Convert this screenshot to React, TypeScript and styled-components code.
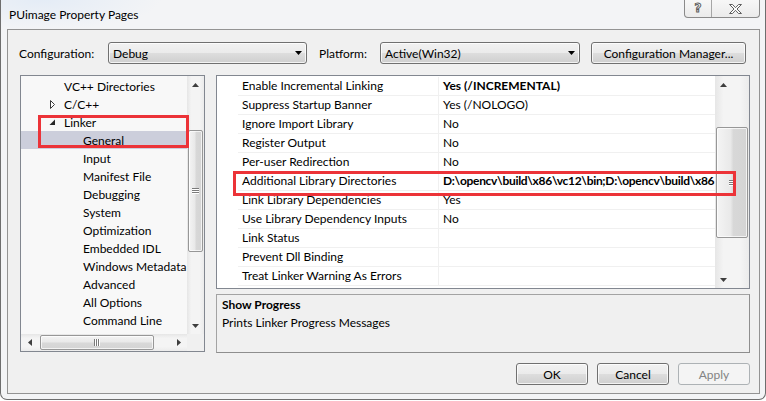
import React from "react";
import styled, { createGlobalStyle, css } from "styled-components";

const FONT = `Lato, "Liberation Sans", "DejaVu Sans", sans-serif`;

const GlobalStyle = createGlobalStyle`
  html, body { margin: 0; padding: 0; background: #ffffff; }
  body { font-family: ${FONT}; font-size: 12px; color: #000; }
  *, *::before, *::after { box-sizing: border-box; }
`;

const Window = styled.div`
  width: 766px;
  height: 400px;
  display: flex;
  flex-direction: column;
  background: radial-gradient(ellipse 120px 30px at 40px 0px, #e4ecf6 0%, rgba(228,236,246,0) 100%), #f3f4f6;
  border: 1px solid #6e6e6e;
  border-top: none;
  border-radius: 0 0 7px 7px;
`;

const TitleBar = styled.div`
  height: 29px;
  flex: none;
  display: flex;
  justify-content: space-between;
  align-items: center;
  padding: 0 5px 0 8px;
`;

const TitleText = styled.span`
  font-size: 12px;
  color: #000;
`;

const CaptionGroup = styled.div`
  align-self: flex-start;
  display: flex;
  height: 18px;
  border: 1px solid #8a8a8a;
  border-top: none;
  border-radius: 0 0 4px 4px;
  background: linear-gradient(#f7f7f7, #ebebeb);
  overflow: hidden;
`;

const CaptionButton = styled.div<{ $w: number; $divider?: boolean }>`
  width: ${(p) => p.$w}px;
  display: flex;
  align-items: center;
  justify-content: center;
  ${(p) => p.$divider && css`border-left: 1px solid #a6a6a6;`}
`;

const HelpGlyph = styled.span`
  font-family: "DejaVu Sans", sans-serif;
  font-weight: bold;
  font-size: 12px;
  line-height: 12px;
  color: #ffffff;
  -webkit-text-stroke: 1px #5e5e5e;
  margin-top: -2px;
`;

const Client = styled.div`
  flex: 1;
  margin: 0 5px 5px 6px;
  border: 1px solid #939393;
  background: #f0f0f0;
  padding: 12px 9px 0 11px;
  display: flex;
  flex-direction: column;
`;

const ConfigRow = styled.div`
  display: flex;
  align-items: center;
  height: 22px;
`;

const FieldLabel = styled.span<{ $w: number; $ml?: number }>`
  width: ${(p) => p.$w}px;
  margin-left: ${(p) => p.$ml ?? 0}px;
  white-space: nowrap;
`;

const win7Face = css`
  background: linear-gradient(#f2f2f2 0%, #ebebeb 48%, #dddddd 52%, #cfcfcf 100%);
  border: 1px solid #707070;
  border-radius: 3px;
  box-shadow: inset 0 0 0 1px rgba(255, 255, 255, 0.75);
`;

const Combo = styled.div<{ $w: number }>`
  ${win7Face};
  width: ${(p) => p.$w}px;
  height: 22px;
  display: flex;
  align-items: center;
  justify-content: space-between;
  padding: 0 4px 0 4px;
`;

const Button = styled.div<{ $w: number; $ml?: number; $disabled?: boolean }>`
  ${win7Face};
  width: ${(p) => p.$w}px;
  margin-left: ${(p) => p.$ml ?? 0}px;
  height: 22px;
  display: flex;
  align-items: center;
  justify-content: center;
  ${(p) =>
    p.$disabled &&
    css`
      background: #f4f4f4;
      border-color: #adb2b5;
      box-shadow: none;
      color: #838383;
    `}
`;

const Body = styled.div`
  margin-top: 11px;
  margin-left: 1px;
  display: flex;
  gap: 11px;
  height: 278px;
`;

const TreePanel = styled.div`
  position: relative;
  width: 185px;
  height: 277px;
  border: 1px solid #828790;
  background: #f8f8f8;
  display: grid;
  grid-template-columns: 1fr 17px;
  grid-template-rows: 1fr 17px;
`;

const TreeList = styled.div`
  overflow: hidden;
  padding-top: 1px;
`;

const TreeRow = styled.div<{ $level: number; $selected?: boolean }>`
  height: 18px;
  display: flex;
  align-items: center;
  padding-left: ${(p) => 27 + 19 * p.$level}px;
  white-space: nowrap;
  ${(p) => p.$selected && css`background: #cccedb;`}
`;

const ArrowSlot = styled.span`
  width: 16px;
  flex: none;
  display: flex;
  align-items: center;
`;

const Corner = styled.div`
  background: #f0f0f0;
`;

const VTrack = styled.div`
  display: flex;
  flex-direction: column;
  background: linear-gradient(to right, #e6e6e6, #f4f4f4 25%, #f4f4f4 75%, #ebebeb);
`;

const HTrack = styled.div`
  display: flex;
  background: linear-gradient(#e6e6e6, #f4f4f4 25%, #f4f4f4 75%, #ebebeb);
`;

const ArrowBox = styled.div`
  width: 17px;
  height: 17px;
  flex: none;
  display: flex;
  align-items: center;
  justify-content: center;
`;

const TrackSpace = styled.div`
  flex: 1;
  display: flex;
  flex-direction: inherit;
`;

const Gap = styled.div<{ $size: number }>`
  flex: none;
  width: ${(p) => p.$size}px;
  height: ${(p) => p.$size}px;
`;

const VThumb = styled.div<{ $len: number }>`
  flex: none;
  height: ${(p) => p.$len}px;
  margin: 0 1px;
  border: 1px solid #979797;
  border-radius: 2px;
  background: linear-gradient(to right, #f4f4f4, #e9e9e9 45%, #d8d8d8 55%, #d4d4d4);
  box-shadow: inset 0 0 0 1px rgba(255, 255, 255, 0.7);
  display: flex;
  align-items: center;
  justify-content: center;
`;

const HThumb = styled.div<{ $len: number }>`
  flex: none;
  width: ${(p) => p.$len}px;
  margin: 1px 0;
  border: 1px solid #979797;
  border-radius: 2px;
  background: linear-gradient(#f4f4f4, #e9e9e9 45%, #d8d8d8 55%, #d4d4d4);
  box-shadow: inset 0 0 0 1px rgba(255, 255, 255, 0.7);
  display: flex;
  align-items: center;
  justify-content: center;
`;

const RightColumn = styled.div`
  flex: 1;
  display: flex;
  flex-direction: column;
  gap: 5px;
`;

const GridPanel = styled.div`
  position: relative;
  height: 214px;
  flex: none;
  border: 1px solid #828790;
  background: #ffffff;
  display: flex;
`;

const GridRows = styled.div`
  flex: 1;
  min-width: 0;
  padding: 1px 0 0 21px;
  overflow: hidden;
`;

const PropRow = styled.div`
  display: grid;
  grid-template-columns: 201px minmax(0, 1fr);
  height: 19px;
  border-bottom: 1px solid #f0f0f0;
`;

const NameCell = styled.div`
  padding-left: 4px;
  line-height: 18px;
  white-space: nowrap;
  border-right: 1px solid #f0f0f0;
  overflow: hidden;
`;

const ValueCell = styled.div<{ $bold?: boolean; $tight?: boolean }>`
  padding-left: 4px;
  line-height: 18px;
  white-space: nowrap;
  overflow: hidden;
  font-weight: ${(p) => (p.$bold ? 700 : 400)};
  letter-spacing: ${(p) => (p.$tight ? "-0.3px" : "normal")};
`;

const RedBox = styled.div<{ $l: number; $t: number; $w: number; $h: number }>`
  position: absolute;
  left: ${(p) => p.$l}px;
  top: ${(p) => p.$t}px;
  width: ${(p) => p.$w}px;
  height: ${(p) => p.$h}px;
  border: 3px solid #ec3338;
  pointer-events: none;
`;

const DescBox = styled.div`
  flex: 1;
  border: 1px solid #a3a3a3;
  border-right-color: #8e8e8e;
  border-bottom-color: #8e8e8e;
  padding: 1px 5px 0 5px;
`;

const DescTitle = styled.div`
  font-weight: 700;
  line-height: 18px;
`;

const DescText = styled.div`
  line-height: 18px;
`;

const Footer = styled.div`
  margin-top: 10px;
  display: flex;
  justify-content: flex-end;
  gap: 9px;
`;

const GlyphColor = "#3e3e3e";

const ComboArrow = () => (
  <svg width="7" height="4" viewBox="0 0 7 4">
    <path d="M0 0h7L3.5 4z" fill="#000" />
  </svg>
);

const ScrollArrow = ({ dir }: { dir: "up" | "down" | "left" | "right" }) => {
  const d =
    dir === "up"
      ? "M0 4L3.5 0L7 4z"
      : dir === "down"
      ? "M0 0h7L3.5 4z"
      : dir === "left"
      ? "M4 0v7L0 3.5z"
      : "M0 0v7L4 3.5z";
  const vertical = dir === "up" || dir === "down";
  return (
    <svg width={vertical ? 7 : 4} height={vertical ? 4 : 7} viewBox={vertical ? "0 0 7 4" : "0 0 4 7"}>
      <path d={d} fill={GlyphColor} />
    </svg>
  );
};

const VGrip = () => (
  <svg width="7" height="6" viewBox="0 0 7 6">
    <path d="M0 0.5h7M0 2.5h7M0 4.5h7" stroke="#7a7a7a" strokeWidth="1" />
    <path d="M0 1.5h7M0 3.5h7M0 5.5h7" stroke="#ffffff" strokeWidth="1" />
  </svg>
);

const HGrip = () => (
  <svg width="6" height="7" viewBox="0 0 6 7">
    <path d="M0.5 0v7M2.5 0v7M4.5 0v7" stroke="#7a7a7a" strokeWidth="1" />
    <path d="M1.5 0v7M3.5 0v7M5.5 0v7" stroke="#ffffff" strokeWidth="1" />
  </svg>
);

const CollapsedArrow = () => (
  <svg width="8" height="9" viewBox="0 0 8 9" style={{ marginLeft: 2 }}>
    <path d="M0.5 0.5L4.5 4.5L0.5 8.5z" fill="#ffffff" stroke="#3a3a3a" strokeWidth="1" />
  </svg>
);

const ExpandedArrow = () => (
  <svg width="7" height="7" viewBox="0 0 7 7" style={{ marginLeft: 1, marginTop: 1 }}>
    <path d="M6 0.5V6H0.5z" fill="#262626" />
  </svg>
);

const CloseGlyph = () => (
  <svg width="13" height="10" viewBox="0 0 13 10">
    <path
      d="M0.5 0.5h3l3 3.2l3-3.2h3l-4.5 4.5l4.5 4.5h-3l-3-3.2l-3 3.2h-3l4.5-4.5z"
      fill="#ffffff"
      stroke="#5e5e5e"
      strokeWidth="1"
      strokeLinejoin="miter"
    />
  </svg>
);

const VScrollbar = ({ offset, len }: { offset: number; len: number }) => (
  <VTrack>
    <ArrowBox>
      <ScrollArrow dir="up" />
    </ArrowBox>
    <TrackSpace>
      <Gap $size={offset} />
      <VThumb $len={len}>
        <VGrip />
      </VThumb>
    </TrackSpace>
    <ArrowBox>
      <ScrollArrow dir="down" />
    </ArrowBox>
  </VTrack>
);

const HScrollbar = ({ offset, len }: { offset: number; len: number }) => (
  <HTrack>
    <ArrowBox>
      <ScrollArrow dir="left" />
    </ArrowBox>
    <TrackSpace>
      <Gap $size={offset} />
      <HThumb $len={len}>
        <HGrip />
      </HThumb>
    </TrackSpace>
    <ArrowBox>
      <ScrollArrow dir="right" />
    </ArrowBox>
  </HTrack>
);

type TreeItem = { text: string; level: number; arrow?: "collapsed" | "expanded"; selected?: boolean };

const treeItems: TreeItem[] = [
  { text: "VC++ Directories", level: 0 },
  { text: "C/C++", level: 0, arrow: "collapsed" },
  { text: "Linker", level: 0, arrow: "expanded" },
  { text: "General", level: 1, selected: true },
  { text: "Input", level: 1 },
  { text: "Manifest File", level: 1 },
  { text: "Debugging", level: 1 },
  { text: "System", level: 1 },
  { text: "Optimization", level: 1 },
  { text: "Embedded IDL", level: 1 },
  { text: "Windows Metadata", level: 1 },
  { text: "Advanced", level: 1 },
  { text: "All Options", level: 1 },
  { text: "Command Line", level: 1 },
];

type Prop = { name: string; value: string; bold?: boolean; tight?: boolean };

const props: Prop[] = [
  { name: "Enable Incremental Linking", value: "Yes (/INCREMENTAL)", bold: true },
  { name: "Suppress Startup Banner", value: "Yes (/NOLOGO)" },
  { name: "Ignore Import Library", value: "No" },
  { name: "Register Output", value: "No" },
  { name: "Per-user Redirection", value: "No" },
  {
    name: "Additional Library Directories",
    value: "D:\\opencv\\build\\x86\\vc12\\bin;D:\\opencv\\build\\x86",
    bold: true,
    tight: true,
  },
  { name: "Link Library Dependencies", value: "Yes" },
  { name: "Use Library Dependency Inputs", value: "No" },
  { name: "Link Status", value: "" },
  { name: "Prevent Dll Binding", value: "" },
  { name: "Treat Linker Warning As Errors", value: "" },
];

export default function App() {
  return (
    <>
      <GlobalStyle />
      <Window>
        <TitleBar>
          <TitleText>PUimage Property Pages</TitleText>
          <CaptionGroup>
            <CaptionButton $w={26}>
              <HelpGlyph>?</HelpGlyph>
            </CaptionButton>
            <CaptionButton $w={48} $divider>
              <CloseGlyph />
            </CaptionButton>
          </CaptionGroup>
        </TitleBar>
        <Client>
          <ConfigRow>
            <FieldLabel $w={89}>Configuration:</FieldLabel>
            <Combo $w={199}>
              <span>Debug</span>
              <ComboArrow />
            </Combo>
            <FieldLabel $w={61} $ml={12}>
              Platform:
            </FieldLabel>
            <Combo $w={200}>
              <span>Active(Win32)</span>
              <ComboArrow />
            </Combo>
            <Button $w={155} $ml={11}>
              Configuration Manager...
            </Button>
          </ConfigRow>
          <Body>
            <TreePanel>
              <TreeList>
                {treeItems.map((it) => (
                  <TreeRow key={it.text} $level={it.level} $selected={it.selected}>
                    <ArrowSlot>
                      {it.arrow === "collapsed" && <CollapsedArrow />}
                      {it.arrow === "expanded" && <ExpandedArrow />}
                    </ArrowSlot>
                    {it.text}
                  </TreeRow>
                ))}
              </TreeList>
              <VScrollbar offset={37} len={122} />
              <HScrollbar offset={2} len={114} />
              <Corner />
              <RedBox $l={17} $t={39} $w={151} $h={33} />
            </TreePanel>
            <RightColumn>
              <GridPanel>
                <GridRows>
                  {props.map((p) => (
                    <PropRow key={p.name}>
                      <NameCell>{p.name}</NameCell>
                      <ValueCell $bold={p.bold} $tight={p.tight}>
                        {p.value}
                      </ValueCell>
                    </PropRow>
                  ))}
                </GridRows>
                <VScrollbar offset={34} len={111} />
                <RedBox $l={16} $t={95} $w={503} $h={25} />
              </GridPanel>
              <DescBox>
                <DescTitle>Show Progress</DescTitle>
                <DescText>Prints Linker Progress Messages</DescText>
              </DescBox>
            </RightColumn>
          </Body>
          <Footer>
            <Button $w={72}>OK</Button>
            <Button $w={72}>Cancel</Button>
            <Button $w={72} $disabled>
              Apply
            </Button>
          </Footer>
        </Client>
      </Window>
    </>
  );
}
